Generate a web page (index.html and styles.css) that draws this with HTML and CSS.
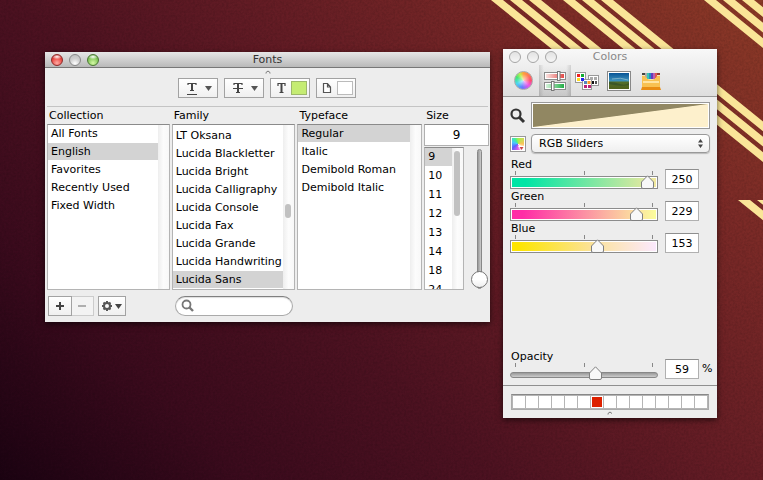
FILE: index.html
```
<!DOCTYPE html>
<html lang="en">
<head>
<meta charset="utf-8">
<title>Fonts and Colors</title>
<link rel="stylesheet" href="styles.css">
</head>
<body>
<svg class="wallpaper" aria-hidden="true">
  <filter id="grain"><feTurbulence type="fractalNoise" baseFrequency="0.45" numOctaves="2" seed="4"/><feColorMatrix values="0 0 0 0 0  0 0 0 0 0  0 0 0 0 0  0.9 0 0 0 -0.3"/></filter>
  <rect class="grain" width="100%" height="100%" filter="url(#grain)"/>
  <g fill="#fae598">
    <path d="M491 0h12l62 50h-12zM510 0h12l62 50h-12zM529 0h12l62 50h-12z"/>
    <path d="M563 0h12l247 200h-12zM582 0h12l247 200h-12zM601 0h12l247 200h-12z"/>
    <path d="M704 0h12l123 100h-12zM723 0h12l123 100h-12zM742 0h12l123 100h-12z"/>
    <path d="M738 200h12l62 50h-12zM757 200h12l62 50h-12z"/>
  </g>
</svg>

<section class="window fonts" aria-label="Fonts">
  <header class="titlebar">
    <div class="lights"><button class="light red" aria-label="Close"></button><button class="light" aria-label="Minimize"></button><button class="light green" aria-label="Zoom"></button></div>
    <h1>Fonts</h1>
  </header>
  <svg class="grip" viewBox="0 0 6 4"><path d="M1 3.5V2.5Q3 -.5 5 2.5V3.5" fill="none" stroke="#777"/></svg>
  <div class="tools">
    <button class="tool" aria-label="Underline"><svg width="38" height="18"><g fill="none" stroke="#444"><path d="M9 6V4.500H17V6M11 11.500H15M8 15.500H18" stroke-width="1.200"/><path d="M13 4V12" stroke-width="2"/></g><path d="M26 7h7l-3.500 5z" fill="#555"/></svg></button>
    <button class="tool" aria-label="Strikethrough"><svg width="38" height="18"><g fill="none" stroke="#444"><path d="M9 6V4.500H17V6M11 13.500H15M8 9.500H18" stroke-width="1.200"/><path d="M13 4V14" stroke-width="2"/></g><path d="M26 7h7l-3.500 5z" fill="#555"/></svg></button>
    <button class="tool" aria-label="Text color"><svg width="38" height="18"><path d="M7 7V4.500H14V7M8.500 13.500H12.500" fill="none" stroke="#444" stroke-width="1.200"/><path d="M10.500 4V14" stroke="#444" stroke-width="2"/><rect x="20.500" y="2.500" width="15" height="13" fill="#c5ec73" stroke="#9eb96b"/></svg></button>
    <button class="tool" aria-label="Document color"><svg width="38" height="18"><path d="M6.500 4.500H10.500L13.500 8V13.500H6.500ZM10.500 4.500V8H13.500" fill="#fff" stroke="#555" stroke-width="1.200"/><rect x="20.500" y="2.500" width="15" height="13" fill="#fff" stroke="#bbb"/></svg></button>
  </div>
  <div class="browser">
    <div class="column">
      <h2>Collection</h2>
      <div class="list"><ul><li>All Fonts</li><li class="selected">English</li><li>Favorites</li><li>Recently Used</li><li>Fixed Width</li></ul><div class="scroller"></div></div>
    </div>
    <div class="column">
      <h2>Family</h2>
      <div class="list family"><ul><li>LT Oksana</li><li>Lucida Blackletter</li><li>Lucida Bright</li><li>Lucida Calligraphy</li><li>Lucida Console</li><li>Lucida Fax</li><li>Lucida Grande</li><li>Lucida Handwriting</li><li class="selected">Lucida Sans</li></ul><div class="scroller"><i></i></div></div>
    </div>
    <div class="column">
      <h2>Typeface</h2>
      <div class="list"><ul><li class="selected">Regular</li><li>Italic</li><li>Demibold Roman</li><li>Demibold Italic</li></ul><div class="scroller"></div></div>
    </div>
    <div class="column size">
      <h2><label for="size">Size</label></h2>
      <input class="field" id="size" value="9">
      <div class="sizes">
        <div class="list"><ul><li class="selected">9</li><li>10</li><li>11</li><li>12</li><li>13</li><li>14</li><li>18</li><li>24</li></ul><div class="scroller"><i></i></div></div>
        <input class="vertical" type="range" min="9" max="96" value="9" aria-label="Font size">
      </div>
    </div>
  </div>
  <footer class="actions">
    <div class="pair"><button class="tool" aria-label="Add"><svg width="22" height="18"><path d="M7 9H15M11 5V13" stroke="#444" stroke-width="2"/></svg></button><button class="tool" disabled aria-label="Remove"><svg width="21" height="18"><path d="M6 9H14" stroke="#999" stroke-width="1.500"/></svg></button></div>
    <button class="tool gear" aria-label="Actions"><svg width="26" height="18"><circle cx="8" cy="9" r="3" fill="none" stroke="#555" stroke-width="2"/><g stroke="#555" stroke-width="2"><path d="M8 4V6M8 12V14M3 9H5M11 9H13M4.500 5.500L6 7M10 11L11.500 12.500M4.500 12.500L6 11M10 7L11.500 5.500"/></g><path d="M16 7h7l-3.500 5z" fill="#444"/></svg></button>
    <label class="search"><svg width="14" height="14"><circle cx="5.500" cy="5.500" r="4" fill="none" stroke="#777" stroke-width="1.800"/><path d="M8.500 8.500L12 12" stroke="#777" stroke-width="2.400"/></svg><input type="search" aria-label="Search fonts"></label>
  </footer>
</section>

<section class="window colors" aria-label="Colors">
  <header class="head">
    <div class="titlebar">
      <div class="lights"><button class="light" aria-label="Close"></button><button class="light" aria-label="Minimize"></button><button class="light" aria-label="Zoom"></button></div>
      <h1>Colors</h1>
    </div>
    <nav class="tabs">
      <button aria-label="Color wheel"><span class="wheel"></span></button>
      <button class="active" aria-label="Color sliders"><svg width="24" height="22"><defs><linearGradient id="r"><stop stop-color="#fbe4e2"/><stop offset="1" stop-color="#e34a47"/></linearGradient><linearGradient id="g"><stop stop-color="#d8f4dd"/><stop offset="1" stop-color="#22ad46"/></linearGradient></defs><g stroke="#8b8b8b"><rect x="1.500" y="2.500" width="21" height="7" fill="#fff"/><rect x="1.500" y="12.500" width="21" height="7" fill="#fff"/></g><path d="M3 4H21V8H3z" fill="url(#r)"/><path d="M3 14H21V18H3z" fill="url(#g)"/><rect x="14.500" y="1.500" width="2.500" height="9" fill="#fff" stroke="#777"/><rect x="8.500" y="11.500" width="2.500" height="9" fill="#fff" stroke="#777"/></svg></button>
      <button aria-label="Color palettes"><svg width="24" height="22"><g fill="#fff" stroke="#999"><rect x="13.500" y="5.500" width="10" height="10"/><rect x=".500" y="2.500" width="10" height="10"/><rect x="7.500" y="9.500" width="9" height="10"/></g><path d="M2 4h3v3h-3z" fill="#e22"/><path d="M6 4h3v3h-3z" fill="#1a3"/><path d="M2 8h3v3h-3z" fill="#fd2"/><path d="M6 8h3v3h-3z" fill="#22e"/><path d="M9 11h3v3h-3z" fill="#58b"/><path d="M12.500 11h3v3h-3z" fill="#f92"/><path d="M9 15h3v3h-3zM13 15h3v3h-3z" fill="#b27"/><path d="M15 7h3v3h-3zM19 7h3v3h-3z" fill="#aaa"/><path d="M17 11h2v3h-2z" fill="#111"/><path d="M20 11h2v3h-2z" fill="#555"/></svg></button>
      <button aria-label="Image palettes"><svg width="24" height="22"><defs><linearGradient id="sky" x2="0" y2="1"><stop stop-color="#075496"/><stop offset=".5" stop-color="#3e93bd"/><stop offset=".56" stop-color="#536f2c"/><stop offset="1" stop-color="#4f601c"/></linearGradient></defs><rect x=".500" y="1.500" width="23" height="19" fill="#fff" stroke="#888"/><rect x="2" y="3" width="20" height="16" fill="url(#sky)"/><path d="M2 12Q8 12 13 14T22 13V15Q13 17 2 14z" fill="#2e4b26" opacity=".6"/><path d="M5 9Q14 7 21 10" stroke="#a7cbd5" fill="none" opacity=".6"/></svg></button>
      <button aria-label="Crayons"><svg width="24" height="22"><path d="M3 3H21V14H3z" fill="#f4e5be"/><path d="M3 3h3v2H3z" fill="#444"/><path d="M6 3h2v5H6z" fill="#aaa"/><path d="M8 3h2v6H8z" fill="#38c7b3"/><path d="M10 3h2v6h-2z" fill="#278ac5"/><path d="M12 3h2v6h-2z" fill="#653bbb"/><path d="M14 3h2v6h-2z" fill="#b95eb3"/><path d="M16 3h2v5h-2z" fill="#e05452"/><path d="M18 3h3v2h-3z" fill="#963a30"/><path d="M3 6H6Q8 10 12 10T18 6H21V18H3z" fill="#f8c152"/><path d="M4 12H20" stroke="#ffe4a1" stroke-width="2"/><path d="M3 17H21L22 20H2z" fill="#e98d14"/></svg></button>
    </nav>
  </header>
  <div class="panel">
    <div class="sample">
      <button class="plain" aria-label="Pick color"><svg width="16" height="16"><circle cx="6" cy="6" r="4.500" fill="none" stroke="#333" stroke-width="2.200"/><path d="M9 9L14 14" stroke="#333" stroke-width="3"/></svg></button>
      <div class="well"></div>
    </div>
    <div class="mode">
      <button class="plain" aria-label="Color profile"><span class="profile"><svg width="7" height="5"><path d="M0 0H7L3.500 5z" fill="#fff"/><path d="M1.500 1H5.500L3.500 4z" fill="#c44"/></svg></span></button>
      <div class="select"><select aria-label="Slider mode"><option>RGB Sliders</option></select><svg width="5" height="9"><path d="M0 3.500L2.500 0L5 3.500zM0 5.500L2.500 9L5 5.500z" fill="#444"/></svg></div>
    </div>
    <div class="channel red-channel"><div class="control"><label for="r-in">Red</label><div class="ticks"><i></i><i></i><i></i></div><input id="r-in" type="range" max="255" value="250"></div><input class="field" value="250" aria-label="Red value"></div>
    <div class="channel green-channel"><div class="control"><label for="g-in">Green</label><div class="ticks"><i></i><i></i><i></i></div><input id="g-in" type="range" max="255" value="229"></div><input class="field" value="229" aria-label="Green value"></div>
    <div class="channel blue-channel"><div class="control"><label for="b-in">Blue</label><div class="ticks"><i></i><i></i><i></i></div><input id="b-in" type="range" max="255" value="153"></div><input class="field" value="153" aria-label="Blue value"></div>
    <div class="channel opacity"><div class="control"><label for="o-in">Opacity</label><div class="ticks"><i></i><i></i><i></i></div><input id="o-in" type="range" max="100" value="59"></div><input class="field" value="59" aria-label="Opacity value"><span>%</span></div>
  </div>
  <footer class="swatches">
    <div class="strip"><i></i><i></i><i></i><i></i><i></i><i></i><i class="filled"></i><i></i><i></i><i></i><i></i><i></i><i></i><i></i><i></i></div>
    <svg class="grip" viewBox="0 0 6 4"><path d="M1 3.500V2.500Q3 -.5 5 2.500" fill="none" stroke="#777"/></svg>
  </footer>
</section>
</body>
</html>
```
FILE: styles.css
```
* { box-sizing: border-box; }

body {
  margin: 0;
  min-height: 100vh;
  position: relative;
  overflow: hidden;
  font: 11px/18px "Lucida Grande", "DejaVu Sans", sans-serif;
  color: #000;
  background: linear-gradient(45deg, #1c0312 0%, #3b0b1d 20%, #4d1221 40%, #651d25 60%, #7b2a27 80%, #8c3a27 100%);
}

.wallpaper { position: absolute; inset: 0; width: 100%; height: 100%; }
.grain { opacity: .25; }

h1, h2 { margin: 0; font-size: inherit; font-weight: normal; }
button, input, select { font: inherit; color: inherit; margin: 0; padding: 0; border: 0; background: none; }
ul { margin: 0; padding: 0; list-style: none; }
svg { display: block; flex: none; }

/* Windows */
.window {
  position: absolute;
  display: flex;
  flex-direction: column;
  background: #ededed;
  box-shadow: 0 2px 6px rgba(0, 0, 0, .6);
}
.fonts { left: 45px; top: 52px; width: 445px; }
.colors { left: 503px; top: 49px; width: 214px; }

.titlebar { display: grid; grid-template-columns: 1fr auto 1fr; align-items: center; height: 16px; line-height: 16px; }
.fonts > .titlebar { background: linear-gradient(#e6e6e6, #b9b9b9); border-bottom: 1px solid #777; }
.fonts h1 { color: #333; }
.colors h1 { color: #888; }
.lights { display: flex; gap: 6px; padding-left: 6px; }
.light {
  width: 12px;
  height: 12px;
  border: 1px solid #888;
  border-radius: 50%;
  background: radial-gradient(circle at 50% 85%, #fff, #cfcfcf 50%, #bbb);
}
.light.red { border-color: #8d2b2a; background: radial-gradient(ellipse 50% 25% at 50% 18%, #fff, transparent), radial-gradient(circle at 50% 80%, #ffaaa2, #e8443f 60%, #b92c2a); }
.light.green { border-color: #4b7734; background: radial-gradient(ellipse 50% 25% at 50% 18%, #fff, transparent), radial-gradient(circle at 50% 80%, #d5f9a6, #7fc355 60%, #4d9530); }
.colors .light { border-color: #a5a5a5; background: linear-gradient(#e2e2e2, #f6f6f6); }

.grip { width: 6px; height: 4px; align-self: center; }
.fonts > .grip { margin-top: 2px; }

/* Fonts toolbar */
.tools {
  display: flex;
  justify-content: center;
  gap: 6px;
  margin: 0 2px;
  padding: 4px 1px 8px 0;
  border-bottom: 1px solid #c4c4c4;
}
.tool { height: 20px; border: 1px solid #a2a2a2; background: linear-gradient(#fff, #f0f0f0); }
.tool:disabled { border-color: #ccc; background: #f3f3f3; }

/* Font browser */
.browser { display: grid; grid-template-columns: 123fr 124fr 125fr 65fr; gap: 2px; padding: 0 1px 0 2px; }
.column { display: flex; flex-direction: column; min-width: 0; }
.column h2 { padding: 0 2px; height: 17px; line-height: 17px; }
.list {
  display: grid;
  grid-template-columns: minmax(0, 1fr) 11px;
  height: 166px;
  overflow: hidden;
  border: 1px solid #b4b4b4;
  border-top-color: #8a8a8a;
  background: #fff;
}
.list li { height: 18px; padding-left: 3px; border-bottom: 1px solid #fff; line-height: 17px; white-space: nowrap; }
.list .selected { background: #d3d3d3; }
.family ul { padding-top: 2px; }
.scroller { background: linear-gradient(90deg, #eee, #fcfcfc 50%, #f8f8f8); padding: 0 2px; }
.scroller i { display: block; width: 6px; height: 14px; border-radius: 3px; background: #c1c1c1; }
.family .scroller { padding-top: 79px; }

.field { width: 100%; height: 20px; border: 1px solid #b0b0b0; border-top-color: #8e8e8e; background: #fff; text-align: center; }
.size .field { height: 22px; font-size: 12px; }
.sizes { display: grid; grid-template-columns: 40px 1fr; margin-top: 1px; }
.size .list { height: 143px; }
.size li { height: 19px; line-height: 18px; }
.size .scroller { padding: 3px 2px; }
.size .scroller i { height: 65px; }

input[type="range"] { appearance: none; display: block; width: 100%; height: 14px; }
.vertical[type="range"] { writing-mode: vertical-lr; direction: rtl; width: 17px; height: 140px; margin: 2px 0 0 7px; }
.vertical::-webkit-slider-runnable-track { width: 5px; border: 1px solid #888; border-radius: 3px; background: linear-gradient(90deg, #999, #ccc); }
.vertical::-webkit-slider-thumb { appearance: none; width: 17px; height: 17px; margin-left: -7px; border: 1px solid #777; border-radius: 50%; background: linear-gradient(#fff 50%, #eee); }

.actions { display: flex; padding: 6px 3px; }
.pair { display: flex; margin-right: 4px; }
.pair .tool + .tool { border-left: 0; }
.gear { width: 28px; }
.search { display: flex; align-items: center; width: 118px; height: 20px; margin-left: 49px; padding: 0 5px; border: 1px solid #aaa; border-top-color: #808080; border-radius: 10px; background: #fff; box-shadow: inset 0 1px 1px #ddd; }
.search input { min-width: 0; flex: 1; outline: 0; }

/* Colors window */
.head { background: linear-gradient(#f8f8f8, #dedede); border-bottom: 1px solid #9a9a9a; }
.tabs { display: flex; padding-left: 4px; }
.tabs button { display: flex; justify-content: center; align-items: center; width: 32px; height: 31px; }
.tabs .active {
  background:
    linear-gradient(90deg, rgba(0, 0, 0, .12), transparent 15%, transparent 85%, rgba(0, 0, 0, .12)),
    linear-gradient(transparent, rgba(0, 0, 0, .1));
}
.wheel { width: 19px; height: 19px; border-radius: 50%; border: 1px solid #aaa; background: radial-gradient(rgba(255, 255, 255, .7), transparent 55%), conic-gradient(#ffa03c, #ff4f70 25%, #ee55e8 37%, #6679ff 53%, #49d9ef 68%, #44e674 82%, #bff04d 92%, #ffa03c); }

.panel { display: flex; flex-direction: column; padding: 5px 7px 4px; }
.sample, .mode { display: grid; grid-template-columns: 16px 1fr; gap: 5px; align-items: center; }
.well {
  height: 27px;
  border: 1px solid #999;
  padding: 1px;
  background: linear-gradient(to bottom right, #918762 49%, #fdf0cc 51%) content-box, #fff;
}
.mode { margin-top: 5px; }
.profile { display: flex; justify-content: flex-end; align-items: flex-end; width: 16px; height: 16px; border: 1px solid #999; background: conic-gradient(#9ef04d, #ffc35a 25%, #fff 37%, #e75be7 50%, #5a60ff 65%, #49c9ff 80%, #44ee9a 92%, #9ef04d); box-shadow: inset 0 0 0 1px #fff; }
.select { display: flex; align-items: center; height: 19px; border: 1px solid #999; border-radius: 4px; background: linear-gradient(#fff, #efefef); box-shadow: 0 1px 1px #bbb; padding-right: 6px; }
.select select { flex: 1; appearance: none; padding-left: 7px; line-height: 17px; }

.channel { display: grid; grid-template-columns: minmax(0, 1fr) 34px 11px; }
.control { padding-right: 7px; }
.red-channel { margin-top: 4px; --ramp: linear-gradient(90deg, #00e5a5 10%, #f5e99f); }
.green-channel { --ramp: linear-gradient(90deg, #ff2ca6 8%, #fbb3a2 65%, #fbff9c); }
.blue-channel { --ramp: linear-gradient(90deg, #fde500 5%, #fbe298 55%, #fbe9ff); }
.channel label { display: block; height: 14px; padding-left: 1px; line-height: 16px; }
.channel .field { margin-top: 12px; }
.channel > span { margin: 11px 0 0 3px; }
.ticks { display: flex; justify-content: space-between; height: 4px; padding: 0 5px; }
.ticks i { width: 1px; background: #888; }
.channel input::-webkit-slider-runnable-track { height: 13px; border: 1px solid #8c8c8c; padding: 1px 0; background: var(--ramp) content-box, #fff; box-shadow: inset 1px 0 #fff, inset -1px 0 #fff; }
.channel input::-webkit-slider-thumb {
  appearance: none;
  width: 13px;
  height: 14px;
  margin-top: -3px;
  background: url("data:image/svg+xml,%3Csvg xmlns='http://www.w3.org/2000/svg' width='13' height='14'%3E%3Cpath d='M6.500 .800L12.500 7V12Q12.500 13.500 11 13.500H2Q.500 13.500 .500 12V7z' fill='%23f8f8f8' stroke='%23808080'/%3E%3C/svg%3E");
}
.opacity { margin-top: 96px; }
.opacity .field { margin-top: 10px; }
.channel.opacity input::-webkit-slider-runnable-track { height: 6px; margin-top: 2px; padding: 0; border-color: #888; border-radius: 3px; background: linear-gradient(#999, #ccc); box-shadow: none; }
.channel.opacity input::-webkit-slider-thumb { margin-top: -7px; }

.swatches { display: flex; flex-direction: column; padding: 8px 8px 3px; border-top: 1px solid #909090; }
.strip { display: grid; grid-template-columns: repeat(15, 1fr); gap: 1px; height: 16px; padding: 1px; border: 1px solid #aaa; border-top-color: #888; background: #b5b5b5; }
.strip i { background: #fff; }
.strip .filled { background: #dd2100; border: 1px solid #fff; }
.swatches .grip { margin-top: 1px; }
```
